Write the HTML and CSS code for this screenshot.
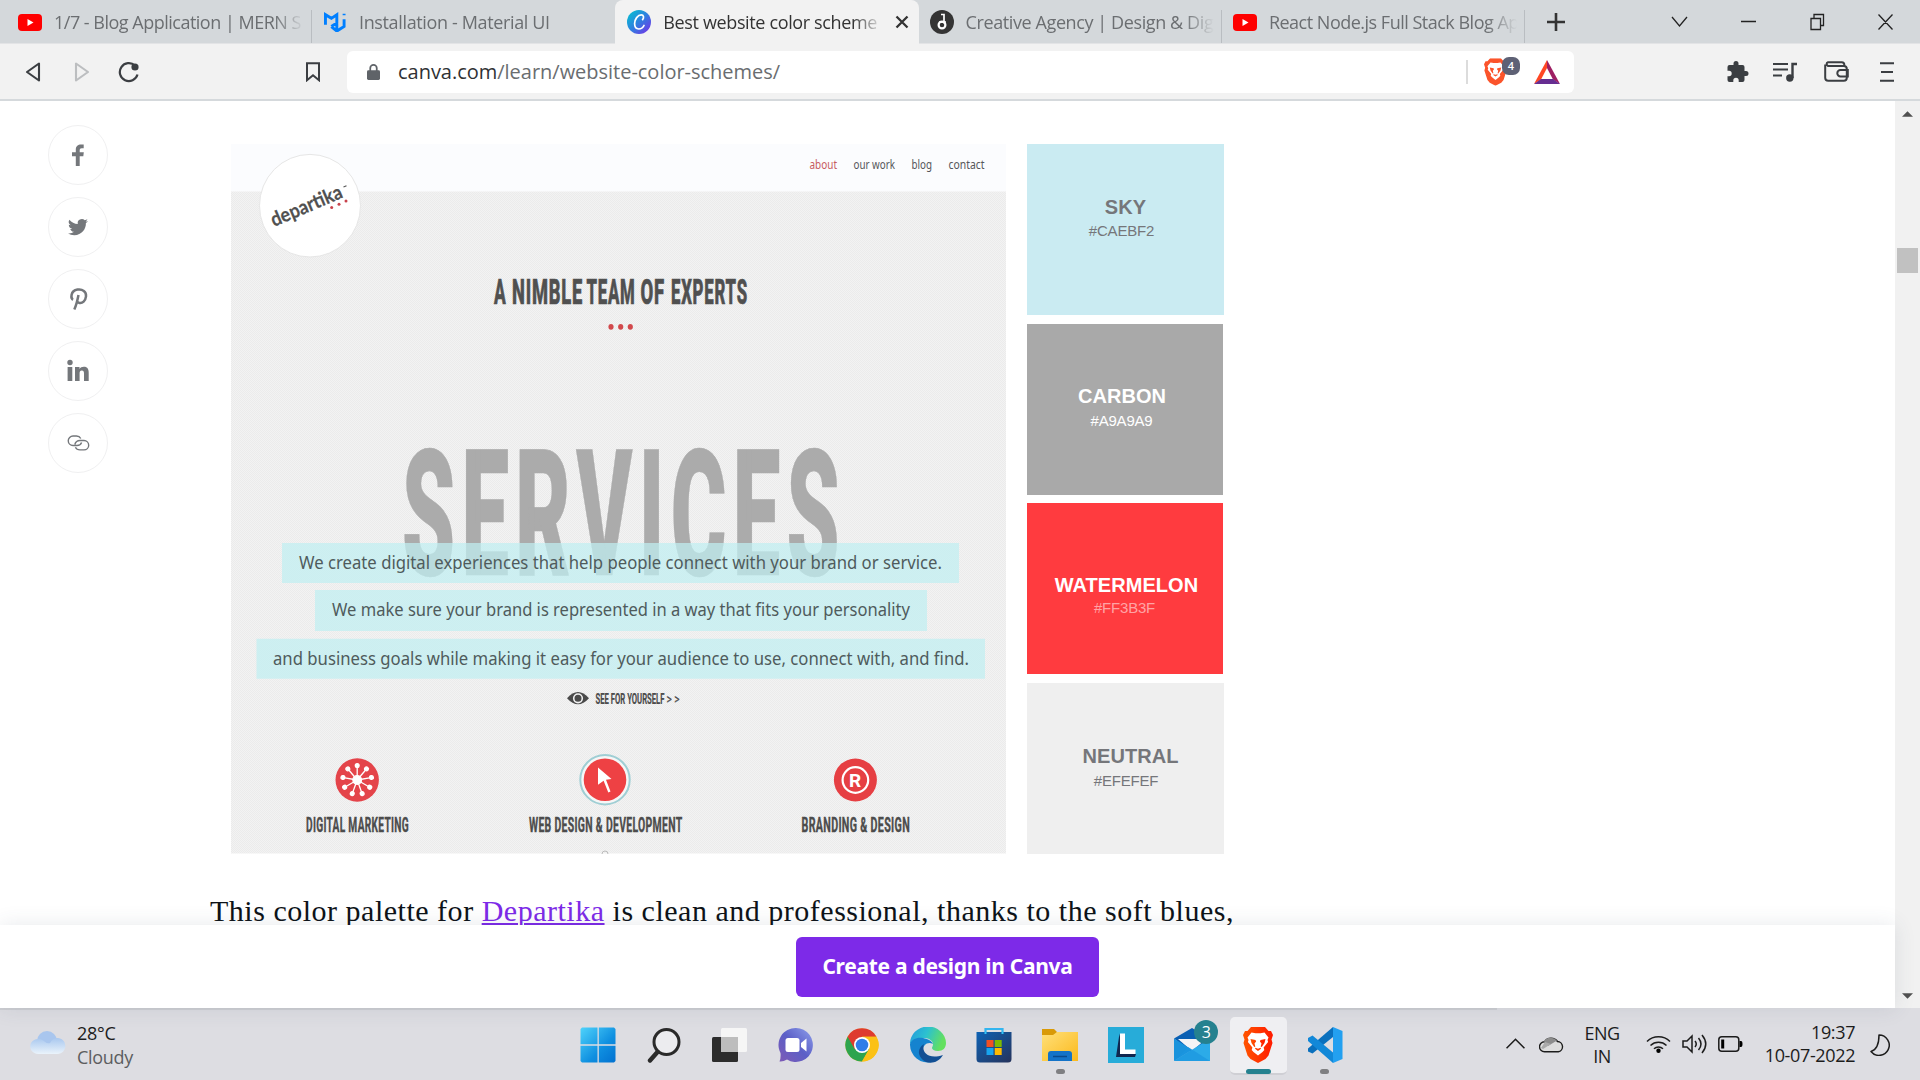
FILE: index.html
```html
<!DOCTYPE html>
<html lang="en">
<head>
<meta charset="utf-8">
<title>Best website color schemes</title>
<link rel="stylesheet" href="styles.css">
</head>
<body>
<svg class="defs" width="0" height="0" aria-hidden="true">
  <defs>
    <linearGradient id="gCanva" x1="0" y1="0" x2="1" y2="1"><stop offset="0" stop-color="#00c9cf"/><stop offset=".5" stop-color="#2f7fe0"/><stop offset="1" stop-color="#7d2ae8"/></linearGradient>
    <linearGradient id="gWin" x1="0" y1="0" x2="1" y2="1"><stop offset="0" stop-color="#4fd3fb"/><stop offset=".6" stop-color="#0f8fe0"/><stop offset="1" stop-color="#0271d0"/></linearGradient>
    <linearGradient id="gCloud" x1="0" y1="0" x2="0" y2="1"><stop offset="0" stop-color="#a9c8ef"/><stop offset="1" stop-color="#eaf3fb"/></linearGradient>
    <linearGradient id="gChat" x1="0" y1="1" x2="1" y2="0"><stop offset="0" stop-color="#7f5ab5"/><stop offset=".5" stop-color="#5b5fc7"/><stop offset="1" stop-color="#8fa0ec"/></linearGradient>
    <linearGradient id="gEdge" x1="0" y1="0" x2="1" y2=".3"><stop offset="0" stop-color="#2398dd"/><stop offset=".5" stop-color="#2cc1d0"/><stop offset="1" stop-color="#63e05f"/></linearGradient>
    <linearGradient id="gStore" x1="0" y1="0" x2="1" y2="1"><stop offset="0" stop-color="#0e62b4"/><stop offset="1" stop-color="#26335c"/></linearGradient>
    <linearGradient id="gFolder" x1="0" y1="0" x2="1" y2="1"><stop offset="0" stop-color="#ffe07a"/><stop offset="1" stop-color="#fbb91c"/></linearGradient>
    <linearGradient id="gBrave" x1="0" y1="0" x2="1" y2="0"><stop offset="0" stop-color="#ff5500"/><stop offset="1" stop-color="#ff1a00"/></linearGradient>
    <symbol id="lion" viewBox="0 0 30 36">
      <path d="M8 0h14l3.500 4 2.500 0 2 4-1.500 4.500 1 3.500-4 12.500-3 3.500L15 36l-7.500-4-3-3.500L.5 16l1-3.500L0 8l2-4h2.500z"/>
      <path fill="#fff" d="M8.500 5.500l4 .8h5l4-.8 4 5-1 2.500.6 2-4.500 5.500.7 2.500-1.800 2L15 28.500 10.500 25l-1.800-2 .7-2.500L4.900 15l.6-2-1-2.500z"/>
      <path d="M7.500 12l5 1 .6 1.500-1.600 2 .8 3-1 .5L8.500 16zM22.500 12l-5 1-.6 1.500 1.600 2-.8 3 1 .5 2.800-4zM12.500 20.800l2.500.9 2.500-.9.500 1L15 24l-3-2.200z"/>
    </symbol>
    <symbol id="yt" viewBox="0 0 24 17"><rect width="24" height="17" rx="4" fill="#f00"/><path d="M9.500 5v7l6-3.500z" fill="#fff"/></symbol>
  </defs>
</svg>

<header class="tabs">
  <div class="tab first"><svg class="fav yt"><use href="#yt"/></svg><span class="label">1/7 - Blog Application | MERN S</span></div>
  <div class="tab plain"><svg class="fav mui" viewBox="0 0 24 22"><path d="M1.500 14V3L8 7l6-4v9l-6 4M14 12v5l-1 4M22 2v1.500M22 8v8l-8 5-6-5" fill="none" stroke="#007fff" stroke-width="3.200"/></svg><span class="label l2">Installation - Material UI</span></div>
  <div class="tab active"><svg class="fav" viewBox="0 0 24 24"><circle cx="12" cy="12" r="12" fill="url(#gCanva)"/><path d="M15.600 9.600c1.600-2 1.100-4.800-1.300-4.800-3.500 0-6.700 4.600-6.700 8.800 0 3.300 1.600 5.400 4.200 5.400 2.300 0 4.200-1.400 5.200-3.500" fill="none" stroke="#fff" stroke-width="1.700" stroke-linecap="round"/></svg><span class="label l3">Best website color scheme</span><svg class="x" viewBox="0 0 14 14"><path d="M1.500 1.500l11 11M12.500 1.500l-11 11" stroke="#333" stroke-width="2.300"/></svg></div>
  <div class="tab"><svg class="fav" viewBox="0 0 24 24"><circle cx="12" cy="12" r="12" fill="#343434"/><path d="M11 4.500h3v9M9 12h7" fill="none" stroke="#fff" stroke-width="1.700"/><circle cx="12" cy="15" r="3.400" fill="none" stroke="#fff" stroke-width="2.200"/></svg><span class="label l4">Creative Agency | Design &amp; Dig</span></div>
  <div class="tab"><svg class="fav yt"><use href="#yt"/></svg><span class="label l5">React Node.js Full Stack Blog Ap</span></div>
  <svg class="plus" viewBox="0 0 18 18"><path d="M9 0v18M0 9h18" stroke="#333" stroke-width="2.600"/></svg>
  <svg class="wincontrols" viewBox="0 0 224 18"><path d="M1 4l7.500 9L16 4M70 8.500h15M140 5.500h9.500v11H140zM143 5.500V1.500h9.500v11h-3M207.500 1.500l14 15M221.500 1.500l-14 15" fill="none" stroke="#222" stroke-width="1.300"/></svg>
</header>

<nav class="toolbar">
  <svg class="back" viewBox="0 0 16 20"><path d="M14 1.500v17L2 10z" fill="none" stroke="#3b3e42" stroke-width="2.100" stroke-linejoin="round"/></svg>
  <svg class="fwd" viewBox="0 0 16 20"><path d="M2 1.500v17L14 10z" fill="none" stroke="#bcbec0" stroke-width="2.100" stroke-linejoin="round"/></svg>
  <svg class="reload" viewBox="0 0 22 22"><path d="M19.500 13.500A9 9 0 1 1 17 4.500" fill="none" stroke="#3b3e42" stroke-width="2.200"/><circle cx="17" cy="6" r="3.600" fill="#3b3e42"/></svg>
  <svg class="mark" viewBox="0 0 16 20"><path d="M2 1.200h12v17l-6-5-6 5z" fill="none" stroke="#3b3e42" stroke-width="2"/></svg>
  <div class="address">
    <svg class="lock" viewBox="0 0 14 18"><rect y="7" width="14" height="10.500" rx="1.500" fill="#5f6368"/><path d="M3.500 8V4.800a3.500 3.500 0 0 1 7 0V8" fill="none" stroke="#5f6368" stroke-width="1.900"/></svg>
    <span class="url"><b>canva.com</b>/learn/website-color-schemes/</span>
    <span class="shield"><svg viewBox="0 0 30 36"><use href="#lion" fill="#fb542b"/></svg><i>4</i></span>
    <svg class="bat" viewBox="0 0 26 24"><path d="M13 0L0 24l7-4.500L13 8z" fill="#ff4724"/><path d="M13 0l13 24-7-4.500L13 8z" fill="#9e1f63"/><path d="M0 24h26l-7-5H7z" fill="#662d91"/></svg>
  </div>
  <svg class="ext" viewBox="0 0 24 24"><path fill="#3b3e42" d="M21 11h-1.500V7a2 2 0 0 0-2-2h-4V3.500a2.500 2.500 0 0 0-5 0V5h-4a2 2 0 0 0-2 2v3.800H4a2.700 2.700 0 0 1 0 5.400H2.500V20a2 2 0 0 0 2 2h3.800v-1.500a2.700 2.700 0 0 1 5.400 0V22h3.800a2 2 0 0 0 2-2v-4H21a2.500 2.500 0 0 0 0-5z"/></svg>
  <svg class="queue" viewBox="0 0 24 20"><path d="M0 2h15M0 7.500h15M0 13.500h9" stroke="#3b3e42" stroke-width="2.200"/><path d="M24 2h-4.500v14" fill="none" stroke="#3b3e42" stroke-width="2.400"/><circle cx="16.800" cy="16" r="3.700" fill="#3b3e42"/></svg>
  <svg class="wallet" viewBox="0 0 25 21"><path d="M1.200 3.500v13.300a3 3 0 0 0 3 3h15.600a3 3 0 0 0 3-3V8a3 3 0 0 0-3-3H4a2 2 0 0 1 0-3.800h13.800a2.500 2.500 0 0 1 2.500 2.500V5M23.800 9h-7.300a3.200 3.200 0 0 0 0 6.400h7.300z" fill="none" stroke="#3b3e42" stroke-width="2"/></svg>
  <svg class="menu" viewBox="0 0 14 20"><path d="M0 1.300h14M1 10h12M0 18.700h14" stroke="#3b3e42" stroke-width="2"/></svg>
</nav>

<div class="viewport">
  <div class="page">
    <main class="content">
      <aside class="share">
        <span><svg viewBox="0 0 24 24"><path d="M13.700 23V13.200h3.600l.5-3.900h-4.100V7.200c0-1.300.5-2 2-2h2V1.600C17.300 1.500 16.300 1.400 15 1.400c-3 0-5.200 1.700-5.200 5v2.900H6v3.900h3.800V23z"/></svg></span>
        <span><svg viewBox="0 0 24 24"><path d="M22 5.900c-.7.300-1.500.5-2.400.7.900-.5 1.500-1.300 1.800-2.300-.8.500-1.700.8-2.600 1a4.100 4.100 0 0 0-7 3.700A11.700 11.700 0 0 1 3.400 4.700a4.100 4.100 0 0 0 1.300 5.500c-.7 0-1.300-.2-1.900-.5 0 2 1.400 3.700 3.300 4.100-.6.200-1.200.2-1.900.1.500 1.600 2 2.800 3.900 2.900A8.300 8.300 0 0 1 2 18.500a11.600 11.600 0 0 0 6.300 1.800c7.500 0 11.900-6.400 11.600-12.200.8-.6 1.500-1.300 2.100-2.200z"/></svg></span>
        <span><svg viewBox="0 0 24 24"><path d="M7 12.800C4.800 11.600 4 4 11.500 2.600c5-.8 9 2 8.500 6.800-.5 4.600-3.700 7-6.500 6.500-1.300-.2-2.300-1-2.600-2M12.500 8c-1 5-2 10-4.200 14.500" fill="none" stroke="#74777b" stroke-width="2.500"/></svg></span>
        <span><svg viewBox="0 0 24 24"><circle cx="4" cy="3.500" r="2.700"/><path d="M1.600 8h4.700v14H1.600zM9 8h4.500v2c.8-1.400 2.300-2.300 4.300-2.300 4 0 4.900 2.600 4.900 6.100V22H18v-7.300c0-1.800-.2-3.200-2.200-3.200s-2.200 1.500-2.200 3.100V22H9z"/></svg></span>
        <span><svg viewBox="0 0 24 24"><path d="M14.800 7.500C13.800 5.700 12.500 5 10.500 5H7a4.500 4.500 0 0 0 0 9.500h4c2.400 0 4-1.200 4.600-3M8.800 13.500C9.500 11 11.500 9.500 14 9.500h4a4.700 4.700 0 0 1 0 9.400h-4c-2.300 0-3.800-.8-4.600-2.600" fill="none" stroke="#74777b" stroke-width="1.400"/></svg></span>
      </aside>
      <article class="article">
        <figure class="example">
          <svg class="artwork" viewBox="231 144 775 709.500">
            <defs><pattern id="weave" width="4" height="4" patternUnits="userSpaceOnUse"><rect width="4" height="4" fill="#f3f3f3"/><path d="M0 0h1v1H0zM2 0h1v1H2zM1 1h1v1H1zM3 1h1v1H3zM0 2h1v1H0zM2 2h1v1H2zM1 3h1v1H1zM3 3h1v1H3z" fill="#ebebeb"/></pattern></defs>
            <rect x="231" y="144" width="775" height="48" fill="#fbfcfe"/>
            <rect x="231" y="191.500" width="775" height="662" fill="url(#weave)"/>
            <ellipse cx="310" cy="205.700" rx="50.500" ry="51.300" fill="#fff" stroke="#e6e6e6"/>
            <g transform="translate(274 227) rotate(-23)"><text class="logo" textLength="76" lengthAdjust="spacingAndGlyphs">departika</text></g>
            <g fill="#c8424c"><circle cx="331.700" cy="207.500" r="1.500"/><circle cx="339" cy="204.200" r="1.500"/><circle cx="346" cy="201" r="1.500"/></g>
            <path d="M343.500 187l3-1.200" stroke="#555" stroke-width="1.200"/>
            <g class="nav">
              <text x="809.500" y="168.800" textLength="27.500" lengthAdjust="spacingAndGlyphs" fill="#c75b5e">about</text>
              <text x="853.500" y="168.800" textLength="41.500" lengthAdjust="spacingAndGlyphs">our work</text>
              <text x="911.500" y="168.800" textLength="20.500" lengthAdjust="spacingAndGlyphs">blog</text>
              <text x="948.500" y="168.800" textLength="36" lengthAdjust="spacingAndGlyphs">contact</text>
            </g>
            <g class="heading">
              <text x="494" y="303.700" textLength="12.500" lengthAdjust="spacingAndGlyphs">A</text>
              <text x="512" y="303.700" textLength="71" lengthAdjust="spacingAndGlyphs">NIMBLE</text>
              <text x="586.500" y="303.700" textLength="49" lengthAdjust="spacingAndGlyphs">TEAM</text>
              <text x="640.500" y="303.700" textLength="24.500" lengthAdjust="spacingAndGlyphs">OF</text>
              <text x="671" y="303.700" textLength="76.800" lengthAdjust="spacingAndGlyphs">EXPERTS</text>
            </g>
            <g fill="#d2494c"><ellipse cx="611" cy="326.800" rx="2.600" ry="2.900"/><ellipse cx="620.700" cy="326.800" rx="2.600" ry="2.900"/><ellipse cx="630.300" cy="326.800" rx="2.600" ry="2.900"/></g>
            <text class="services" x="402" y="574.500" textLength="444" lengthAdjust="spacingAndGlyphs">SERVICES</text>
            <g fill="#bfeef1" fill-opacity=".72"><path d="M282 543h677v40H282zM315 590h612v41H315zM256.500 638.700h728.500v40H256.500z"/></g>
            <g class="copy">
              <text x="299" y="569" textLength="643" lengthAdjust="spacingAndGlyphs">We create digital experiences that help people connect with your brand or service.</text>
              <text x="332" y="616" textLength="578" lengthAdjust="spacingAndGlyphs">We make sure your brand is represented in a way that fits your personality</text>
              <text x="273" y="664.800" textLength="696" lengthAdjust="spacingAndGlyphs">and business goals while making it easy for your audience to use, connect with, and find.</text>
            </g>
            <path d="M567 698.300q11-12.500 22 0q-11 12-22 0z" fill="#4a4a4a"/><circle cx="578" cy="698.300" r="4.300" fill="#4a4a4a" stroke="#f0f0f0" stroke-width="1.600"/>
            <text class="see" x="595.500" y="704" textLength="69" lengthAdjust="spacingAndGlyphs">SEE FOR YOURSELF</text>
            <text class="see thin" x="666.500" y="703.500" textLength="13" lengthAdjust="spacingAndGlyphs">&gt; &gt;</text>
            <circle cx="357.200" cy="780" r="21.700" fill="#e4444a"/>
            <g stroke="#fff" stroke-width="1.300" fill="#fff" transform="translate(357.200 780)">
              <circle r="4.300"/>
              <g id="spoke"><path d="M0 0V-14"/><circle cy="-14.500" r="1.900"/></g>
              <use href="#spoke" transform="rotate(40)"/><use href="#spoke" transform="rotate(80)"/><use href="#spoke" transform="rotate(120)"/><use href="#spoke" transform="rotate(160)"/><use href="#spoke" transform="rotate(200)"/><use href="#spoke" transform="rotate(240)"/><use href="#spoke" transform="rotate(280)"/><use href="#spoke" transform="rotate(320)"/>
            </g>
            <circle cx="605" cy="779.700" r="24.700" fill="#f6f6f6" stroke="#9fced4" stroke-width="2"/><circle cx="605" cy="779.700" r="21.300" fill="#ee4144"/>
            <path d="M598 767.500l13.500 11.500-5.500.8 4.500 11.800-2.200.9-4.700-11.700-5.600 4z" fill="#fff"/>
            <circle cx="855.400" cy="780" r="21.500" fill="#e63f43"/><circle cx="855.400" cy="780" r="12.800" fill="none" stroke="#fff" stroke-width="2.200"/>
            <text class="reg" x="849" y="787.200">R</text>
            <g class="caps">
              <text x="306" y="832" textLength="103" lengthAdjust="spacingAndGlyphs">DIGITAL MARKETING</text>
              <text x="529" y="832" textLength="153.500" lengthAdjust="spacingAndGlyphs">WEB DESIGN &amp; DEVELOPMENT</text>
              <text x="801.500" y="832" textLength="108.500" lengthAdjust="spacingAndGlyphs">BRANDING &amp; DESIGN</text>
            </g>
            <circle cx="605" cy="854" r="3" fill="none" stroke="#bbb"/>
          </svg>
          <div class="palette">
            <div class="swatch sky"><strong>SKY</strong><span>#CAEBF2</span></div>
            <div class="swatch carbon"><strong>CARBON</strong><span>#A9A9A9</span></div>
            <div class="swatch melon"><strong>WATERMELON</strong><span>#FF3B3F</span></div>
            <div class="swatch neutral"><strong>NEUTRAL</strong><span>#EFEFEF</span></div>
          </div>
        </figure>
        <p class="lead"><span class="w1">This color palette for</span> <a>Departika</a> <span class="w2">is clean and professional, thanks to the soft blues,</span></p>
      </article>
    </main>
    <div class="cta"><div class="button">Create a design in Canva</div></div>
  </div>
  <div class="scrollbar"><svg viewBox="0 0 12 6"><path d="M0 6l6-6 6 6z"/></svg><div class="thumb"></div><svg viewBox="0 0 12 6"><path d="M0 0l6 6 6-6z"/></svg></div>
</div>

<footer class="taskbar">
  <div class="weather">
    <svg viewBox="0 0 36 23"><circle cx="17" cy="10" r="10" fill="#a9c6ee"/><path d="M8 23A8 7.500 0 1 1 13 9.500Q17 13 20 12a8 8 0 1 1 8 11z" fill="url(#gCloud)"/></svg>
    <div><div>28°C</div><div class="dim">Cloudy</div></div>
  </div>
  <div class="apps">
    <span><svg viewBox="0 0 36 36"><path d="M2 .5h15.500v16.700H.5V2zM18.800.5H34L35.500 2v15.200H18.800zM.5 18.800h17v16.700H2L.5 34zM18.800 18.800h16.700V34L34 35.500H18.800z" fill="url(#gWin)"/></svg></span>
    <span><svg viewBox="0 0 36 36"><circle cx="20.500" cy="15" r="12.500" fill="#ececef" stroke="#2a2a2a" stroke-width="3"/><path d="M11.500 25L4 33.500" stroke="#2a2a2a" stroke-width="4.400" stroke-linecap="round"/></svg></span>
    <span><svg viewBox="0 0 36 36"><rect y="10" width="26" height="25" rx="1.500" fill="#2c2c2c"/><rect x="9" y="1" width="26" height="24" rx="1.500" fill="#f8f8f8" opacity=".93"/><path d="M9 10h17v15H9z" fill="#bdbdbd"/></svg></span>
    <span><svg viewBox="0 0 36 36"><path d="M18 1a17 17 0 1 1-9 31.500Q5 35 1.500 34.500 3 31 2.500 26A17 17 0 0 1 18 1z" fill="url(#gChat)"/><rect x="7.500" y="11" width="14" height="14" rx="2.500" fill="#fff"/><path d="M23 16l5.500-4.500v13L23 20z" fill="#fff"/></svg></span>
    <span><svg viewBox="0 0 36 36"><circle cx="18" cy="18" r="16.600" fill="#fbc116"/><path d="M18 18L3.600 9.700A16.600 16.600 0 0 0 18 34.600l8.300-14.400z" fill="#2da44e"/><path d="M3.600 9.700A16.600 16.600 0 0 1 32.400 9.700H18l-7.200 12.500z" fill="#de3b30"/><path d="M25 22.200L18 34.600a16.600 16.600 0 0 0 14.400-24.900H18z" fill="#fbc116"/><circle cx="18" cy="18" r="8" fill="#fff"/><circle cx="18" cy="18" r="6.300" fill="#2f7de9"/></svg></span>
    <span><svg viewBox="0 0 36 36"><path d="M0 17A18 17 0 0 1 36 16c0 5-3 8-8 8-4 0-6-1.500-6-3 0-1 1-1.500 1-4 0-3-4-6-9-6S2 14 0 17z" fill="url(#gEdge)"/><path d="M0 17c2-5 7-7 13-6 5 1 9 3 10 6-6-3-11 2-10 8 1 6 5 9 9 10A18 18 0 0 1 0 17z" fill="#1583cf"/><path d="M14 17c-3 8 4 16 19 11-4 7-11 9-17 7-8-4-10-13-2-18z" fill="#124f94"/></svg></span>
    <span><svg viewBox="0 0 36 36"><path d="M9.500 8V2h17v6" fill="none" stroke="#33b5ef" stroke-width="2.200"/><path d="M.5 5h35v27a3.500 3.500 0 0 1-3.500 3.500H4A3.500 3.500 0 0 1 .5 32z" fill="url(#gStore)"/><path d="M9.500 5v2M26.500 5v2" stroke="#33c5f9" stroke-width="2"/><path d="M10.500 13h7v7h-7z" fill="#f25022"/><path d="M18.700 13h7v7h-7z" fill="#7fba00"/><path d="M10.500 21h7v7h-7z" fill="#18a5ef"/><path d="M18.700 21h7v7h-7z" fill="#ffb900"/></svg></span>
    <span><svg viewBox="0 0 36 36"><path d="M0 2h12l3 3-3 6H0z" fill="#d99a08"/><path d="M0 8h11l4-3h21v29H0z" fill="url(#gFolder)"/><path d="M6 34v-7a3 3 0 0 1 3-3h18a3 3 0 0 1 3 3v7z" fill="#1473c8"/><path d="M11 29.500h14" stroke="#0a4a8c" stroke-width="1.500"/></svg><i class="dot"></i></span>
    <span><svg viewBox="0 0 36 36"><path d="M0 0h36v36H0z" fill="#27acd9"/><path d="M11.500 6.500L8 30h19l1-3-14-2z" fill="#11274f"/><path d="M12 6.500h5V22.500h10.500V27H12z" fill="#fff"/></svg></span>
    <span><svg viewBox="0 0 36 36"><path d="M0 11.500L18 1l18 10.500L18 26z" fill="#0a5fb3"/><path d="M4 12h28L18 24z" fill="#f4f4f6"/><path d="M0 11.500l18 11.300L0 34z" fill="#1a93dc"/><path d="M36 11.500V34H0z" fill="#2cabe8"/><path d="M0 34h36L14 20z" fill="#1b96df" opacity=".7"/></svg><i class="badge">3</i></span>
    <span class="current"><svg viewBox="0 0 36 36"><use href="#lion" x="3" width="30" height="36" fill="url(#gBrave)"/></svg><i class="dot"></i></span>
    <span><svg viewBox="0 0 36 36"><path d="M26 0l9.500 4v28L26 36z" fill="#23a0f0"/><path d="M26 0v10L5.500 26.500 1 24.500v-3z" fill="#0a70bd"/><path d="M1 11l4.500-2.500L26 25.500V36L1 14z" fill="#1288d8"/></svg><i class="dot"></i></span>
  </div>
  <div class="tray">
    <svg class="up" viewBox="0 0 18 10"><path d="M.5 9.500L9 1l8.500 8.500" fill="none" stroke="#1c1c1c" stroke-width="1.500"/></svg>
    <svg class="onedrive" viewBox="0 0 25 18"><path d="M5.500 16.800a5 5 0 0 1 0-10 7.500 7 0 0 1 13-.3 5.200 5.200 0 0 1 .8 10.300z" fill="#ddd" stroke="#1c1c1c" stroke-width="1.400"/><path d="M5 6.500a7.500 6.500 0 0 1 13-1L9 11z" fill="#8c8c8c"/><path d="M2 13l4-6 6 2-8 5z" fill="#aaa"/></svg>
    <div class="lang">ENG<br>IN</div>
    <svg class="wifi" viewBox="0 0 25 18"><path d="M1 6.500a16.500 16.500 0 0 1 23 0M4.500 10.500a11.500 11.500 0 0 1 16 0M8 13.700a6.500 6.500 0 0 1 9 0" fill="none" stroke="#1c1c1c" stroke-width="1.500"/><circle cx="12.500" cy="15.800" r="2.200"/></svg>
    <svg class="vol" viewBox="0 0 25 20"><path d="M1 7h4l5-5v16l-5-5H1zM13 7q2.500 3 0 6M16.500 4q5 6 0 12M20 1q7.500 9 0 18" fill="none" stroke="#1c1c1c" stroke-width="1.500"/></svg>
    <svg class="batt" viewBox="0 0 25 16"><rect x=".8" y=".8" width="20" height="14.400" rx="3" fill="none" stroke="#1c1c1c" stroke-width="1.500"/><path d="M3.200 3.500h3v9h-3zM21.500 5h1.500q1.500 0 1.500 3t-1.500 3h-1.500z"/></svg>
    <div class="clock">19:37<br><span>10-07-2022</span></div>
    <svg class="moon" viewBox="0 0 20 22"><path d="M9 1a10.200 10.200 0 1 1-8 16.500Q9 15 9 1z" fill="none" stroke="#1c1c1c" stroke-width="1.500" stroke-linejoin="round"/></svg>
  </div>
</footer>
</body>
</html>
```
FILE: styles.css
```css
* { box-sizing: border-box; }
body {
  margin: 0;
  width: 1920px;
  height: 1080px;
  overflow: hidden;
  display: flex;
  flex-direction: column;
  background: #fff;
  font-family: "Open Sans", "Noto Sans", sans-serif;
}
svg { display: block; flex: none; }
.defs { position: absolute; }

/* Tab strip */
.tabs {
  height: 44px;
  flex: none;
  display: flex;
  align-items: center;
  background: #d4d8db;
  border-bottom: 1px solid #e3e4e6;
}
.tab {
  width: 303.300px;
  height: 33px;
  flex: none;
  align-self: flex-end;
  display: flex;
  align-items: center;
  gap: 12px;
  padding: 0 7px 9px 11px;
  border-right: 1px solid #b9bdc1;
  font-size: 18px;
  color: #6b6e71;
}
.tab.first { width: 312px; padding-left: 18px; }
.tab.plain { border-right: 0; }
.tab.active {
  height: 44px;
  margin-bottom: -1px;
  padding: 0 10px 0 12px;
  border: 0;
  border-radius: 8px 8px 0 0;
  background: #f2f2f2;
  color: #333;
}
.fav { width: 24px; height: 24px; }
.fav.yt { height: 17px; }
.fav.mui { height: 20px; }
.label {
  flex: 1;
  min-width: 0;
  overflow: hidden;
  white-space: nowrap;
  letter-spacing: -0.5px;
  -webkit-mask-image: linear-gradient(90deg, #000 calc(100% - 30px), transparent);
}
.label.l2, .label.l3 { letter-spacing: -0.36px; }
.label.l4 { letter-spacing: -0.4px; }
.x { width: 14px; height: 14px; }
.plus { width: 18px; height: 18px; margin-left: 22px; }
.wincontrols { width: 224px; height: 18px; margin-left: 106px; }

/* Toolbar */
.toolbar {
  height: 57px;
  flex: none;
  display: flex;
  align-items: center;
  padding: 0 25px;
  background: #f2f2f2;
  border-bottom: 2px solid #d5d9dc;
}
.back, .fwd, .mark { width: 16px; height: 20px; }
.fwd { margin-left: 33px; }
.reload { width: 22px; height: 22px; margin-left: 28px; }
.mark { margin-left: 165px; }
.address {
  width: 1227px;
  height: 42px;
  margin-left: 26px;
  padding: 0 14px 0 20px;
  display: flex;
  align-items: center;
  border-radius: 6px;
  background: #fff;
}
.lock { width: 13px; height: 18px; }
.url { margin-left: 18px; flex: 1; font-size: 20px; line-height: 26px; padding-top: 1px; color: #6a6d70; letter-spacing: -0.020px; }
.url b { font-weight: 400; color: #2f3134; }
.shield { position: relative; width: 68px; height: 24px; padding-left: 16px; border-left: 2px solid #dcdcdc; display: flex; align-items: center; }
.shield svg { width: 23px; height: 28px; }
.shield i {
  position: absolute;
  left: 34px;
  top: -3px;
  width: 18px;
  height: 18px;
  border-radius: 7px;
  background: #5e6175;
  color: #fff;
  font: 600 11px/18px "Open Sans", sans-serif;
  text-align: center;
}
.bat { width: 26px; height: 24px; }
.ext { width: 24px; height: 24px; margin-left: 151px; }
.queue { width: 24px; height: 20px; margin-left: 24px; }
.wallet { width: 25px; height: 21px; margin-left: 27px; }
.menu { width: 14px; height: 20px; margin-left: 31px; }

/* Page */
.viewport { height: 907px; flex: none; display: flex; }
.page { width: 1895px; display: flex; flex-direction: column; }
.content { height: 824px; overflow: hidden; display: flex; }
.share { width: 210px; padding: 24px 0 0 48px; display: flex; flex-direction: column; gap: 12px; }
.share span {
  width: 60px;
  height: 60px;
  display: grid;
  place-items: center;
  border: 1px solid #f0f0f1;
  border-radius: 50%;
}
.share svg { width: 24px; height: 24px; fill: #74777b; }
.article { width: 1100px; }
.example { display: flex; gap: 21px; margin: 43px 0 0 21px; }
.artwork { width: 775px; height: 709.500px; }
.palette { width: 197px; display: grid; grid-template-rows: repeat(4, 171px); row-gap: 8.600px; }
.swatch {
  display: flex;
  flex-direction: column;
  align-items: center;
  font-family: "Liberation Sans", Arial, sans-serif;
  color: #75767a;
}
.swatch strong { font-size: 20px; line-height: 24px; letter-spacing: 0.05px; }
.swatch span { font-size: 15px; line-height: 24px; letter-spacing: -0.2px; }
.sky { background: #caebf2; padding-top: 51px; }
.sky span { padding-right: 8px; }
.carbon { background: #a9a9a9; padding: 60px 6px 0 0; margin-right: 1px; color: #fff; }
.carbon span { padding-top: 1px; padding-right: 1px; }
.melon { background: #ff3b3f; padding: 70px 0 0 3px; margin-right: 1px; color: #fff; }
.melon span { color: #ffa3a5; padding-right: 4px; line-height: 22px; }
.neutral { background: #efefef; padding: 61px 0 0 10px; }
.neutral span { padding-right: 9px; line-height: 25px; }

.logo { font: 700 20px Lato, sans-serif; fill: #505050; stroke: #505050; stroke-width: .2px; }
.nav text { font: 400 12px "Noto Sans", sans-serif; }
.nav { fill: #55565a; }
.heading { font: 800 34.700px Roboto, sans-serif; fill: #505050; stroke: #505050; stroke-width: .7px; letter-spacing: 1.500px; }
.services { font: 900 176px Roboto, sans-serif; fill: #ababab; stroke: #ababab; stroke-width: .6px; letter-spacing: 13px; }
.copy { font: 400 17.800px "Noto Sans", sans-serif; fill: #4f5b5c; }
.see { font: 700 14.500px Roboto, sans-serif; fill: #4c4c4c; stroke: #4c4c4c; stroke-width: .2px; }
.see.thin { font-weight: 400; }
.reg { font: 700 19px Roboto, sans-serif; fill: #fff; }
.caps { font: 700 20px Roboto, sans-serif; fill: #4c4c4c; stroke: #4c4c4c; stroke-width: .4px; letter-spacing: .6px; }

.lead {
  margin: 39px 0 0;
  white-space: nowrap;
  font: 30px/36px "Liberation Serif", serif;
  letter-spacing: .51px;
  color: #0e1318;
}
.lead a { color: #7d2ae8; text-decoration: underline; text-decoration-thickness: 2px; text-underline-offset: 2px; }

.cta {
  height: 83px;
  display: flex;
  align-items: flex-start;
  justify-content: center;
  padding-top: 12px;
  background: #fff;
  box-shadow: 0 0 20px rgba(57, 76, 96, .12);
  position: relative;
}
.button {
  width: 303px;
  height: 60px;
  border-radius: 6px;
  background: #7d2ae8;
  color: #fff;
  font: 700 21px/58px "Noto Sans", sans-serif;
  letter-spacing: -0.3px;
  text-align: center;
}
.scrollbar { width: 25px; display: flex; flex-direction: column; align-items: center; background: #f1f1f1; padding: 10px 0 9px; }
.scrollbar svg { width: 11px; height: 6px; fill: #505050; }
.thumb { width: 21px; height: 25px; margin: 131px 0 auto; background: #c1c1c1; }

/* Taskbar */
.taskbar {
  height: 72px;
  flex: none;
  display: flex;
  background: linear-gradient(#cdced2, #cdced2) 0 0 / 1497px 2px no-repeat #dddde2;
  font-size: 18px;
  line-height: 23px;
  color: #1c1c1c;
}
.weather { width: 564.500px; display: flex; gap: 11px; padding: 14px 0 0 30px; letter-spacing: -0.3px; }
.weather svg { width: 36px; height: 23px; margin-top: 9px; }
.dim { color: #5c5d60; line-height: 25px; }
.apps { display: grid; grid-template-columns: repeat(12, 66.100px); }
.apps span { position: relative; display: flex; justify-content: center; padding-top: 19px; }
.apps svg { width: 36px; height: 36px; }
.apps .current { justify-self: center; width: 57px; height: 58px; margin-top: 9px; padding-top: 10px; border-radius: 5px; background: #efeff2; border-bottom: 2px solid #cfcfd4; }
.dot { position: absolute; top: 61px; left: calc(50% - 4.500px); width: 9px; height: 5px; border-radius: 3px; background: #7f7f82; }
.current .dot { top: 52px; left: 16px; width: 25px; background: #25818f; }
.badge { position: absolute; left: 35px; top: 12px; width: 24px; height: 24px; border-radius: 50%; background: #25818f; color: #fff; font: 16px/24px "Open Sans", sans-serif; text-align: center; }
.tray { display: flex; align-items: flex-start; margin-left: 148.500px; }
.up { width: 19px; height: 11px; margin-top: 30px; }
.onedrive { width: 25px; height: 18px; margin: 27px 0 0 14px; }
.lang { width: 50px; margin: 14px 0 0 13px; text-align: center; letter-spacing: -0.5px; }
.wifi { width: 25px; height: 18px; margin: 27px 0 0 19px; }
.vol { width: 25px; height: 20px; margin: 26px 0 0 11px; }
.batt { width: 25px; height: 16px; margin: 28px 0 0 11px; }
.clock { width: 112px; margin-top: 13px; text-align: right; letter-spacing: -0.35px; white-space: nowrap; }
.moon { width: 20px; height: 22px; margin: 26px 0 0 15px; }
```
